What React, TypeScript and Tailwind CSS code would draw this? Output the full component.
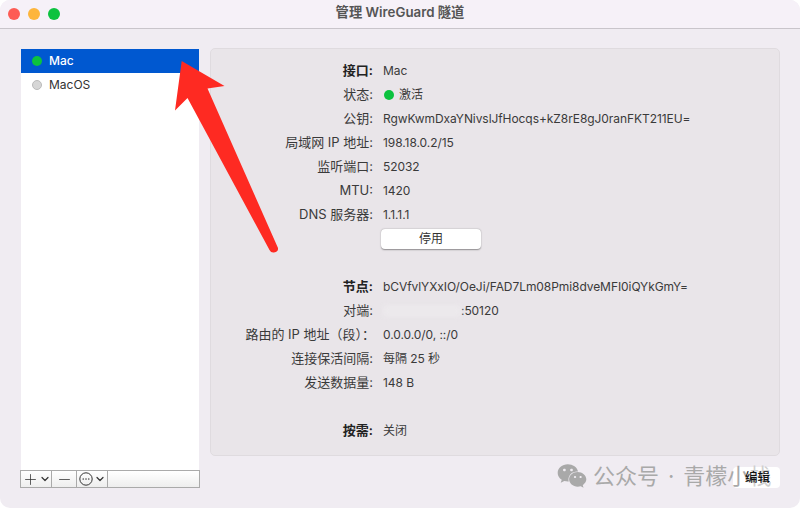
import { ChevronDown, Minus, Plus } from "lucide-react";
import { FaWeixin } from "react-icons/fa";

const font = { fontFamily: '"Inter", "Noto Sans CJK SC", sans-serif' };

function Row({
  label,
  bold,
  children,
}: {
  label: string;
  bold?: boolean;
  children?: React.ReactNode;
}) {
  return (
    <div className="flex h-6 items-center">
      <div
        className={`w-[164px] whitespace-pre text-right text-[13px] ${
          label.endsWith(":") ? "pr-[2px]" : ""
        } ${bold ? "font-semibold text-[#222]" : "text-[#3a3a3a]"}`}
      >
        {label}
      </div>
      <div className="ml-2 flex items-center whitespace-pre tracking-[-0.07px] text-[#3a3a3a]">
        {children}
      </div>
    </div>
  );
}

function MoreIcon() {
  return (
    <svg width={14} height={14} viewBox="0 0 14 14" fill="none" stroke="#333" strokeWidth={1}>
      <circle cx={7} cy={7} r={6.2} />
      <circle cx={4.2} cy={7} r={0.5} fill="#333" strokeWidth={0.4} />
      <circle cx={7} cy={7} r={0.5} fill="#333" strokeWidth={0.4} />
      <circle cx={9.8} cy={7} r={0.5} fill="#333" strokeWidth={0.4} />
    </svg>
  );
}

function Arrow() {
  return (
    <svg
      className="absolute left-0 top-0"
      width={800}
      height={508}
      viewBox="0 0 800 508"
    >
      <path
        d="M181.7 61 L224.5 86 L207.5 88.5 L278 248 Q278.5 252 274 252.5 Q271 253 269.5 250 L187.5 98 L175 110.5 Z"
        fill="#fe2a22"
      />
    </svg>
  );
}

export default function App() {
  return (
    <div className="relative h-[508px] w-[800px] overflow-hidden bg-white text-[12px]" style={font}>
      <div className="flex h-full flex-col overflow-hidden rounded-[10px] bg-[#f0ecf2]">
        {/* 标题栏 */}
        <div className="relative flex h-[29px] shrink-0 items-center justify-center border-b border-[#c9c5cb] bg-[#f6f1f8]">
          <div className="absolute left-[8px] flex gap-2">
            <div className="size-3 rounded-full bg-[#fd5c55]" />
            <div className="size-3 rounded-full bg-[#fdb53c]" />
            <div className="size-3 rounded-full bg-[#0cc23f]" />
          </div>
          <span className="mb-[2px] text-[13.3px] font-semibold text-[#555]">管理 WireGuard 隧道</span>
        </div>

        <div className="flex gap-[11px] pl-[21px] pr-5 pt-[19px]">
          {/* 左侧列表 */}
          <div className="mt-px flex h-[439px] w-[178px] shrink-0 flex-col bg-white">
            <div className="flex h-6 items-center bg-[#0058d0] pl-[11px] font-medium text-white">
              <div className="size-[10px] rounded-full bg-[#0cc23f]" />
              <span className="ml-[7px]">Mac</span>
            </div>
            <div className="flex h-6 items-center pl-[11px] text-[#333]">
              <div className="size-[10px] rounded-full border border-[#bbb] bg-[#d6d6d6]" />
              <span className="ml-[7px]">MacOS</span>
            </div>
            <div className="-mx-px mt-auto flex h-[18px] border border-[#aaa] bg-gradient-to-b from-white to-[#eeeeee] text-[#333]">
              <div className="flex w-[31px] items-center justify-center border-r border-[#aaa]">
                <Plus size={17} strokeWidth={1.1} />
                <ChevronDown size={12} strokeWidth={2.4} />
              </div>
              <div className="flex w-[25px] items-center justify-center border-r border-[#aaa]">
                <Minus size={17} strokeWidth={1.1} />
              </div>
              <div className="flex w-[31px] items-center justify-center gap-[1px] border-r border-[#aaa]">
                <MoreIcon />
                <ChevronDown size={12} strokeWidth={2.4} />
              </div>
            </div>
          </div>

          {/* 右侧详情 */}
          <div className="flex w-[570px] flex-col">
            <div className="h-[408px] rounded-[5px] border border-[#dfdbdf] bg-[#e9e5e9] pt-[10px]">
              <Row label="接口:" bold>Mac</Row>
              <Row label="状态:">
                <div className="ml-px size-[10px] rounded-full bg-[#0cc23f]" />
                <span className="ml-[5px]">激活</span>
              </Row>
              <Row label="公钥:">RgwKwmDxaYNivslJfHocqs+kZ8rE8gJ0ranFKT211EU=</Row>
              <Row label="局域网 IP 地址:">198.18.0.2/15</Row>
              <Row label="监听端口:">52032</Row>
              <Row label="MTU:">1420</Row>
              <Row label="DNS 服务器:">1.1.1.1</Row>
              <div className="ml-[170px] mt-[2px] flex h-5 w-[100px] items-center justify-center rounded-[4px] bg-white text-[#333] shadow-[0_0.5px_1.5px_rgba(0,0,0,0.4)]">
                停用
              </div>
              <div className="h-[26px]" />
              <Row label="节点:" bold>bCVfvlYXxIO/OeJi/FAD7Lm08Pmi8dveMFI0iQYkGmY=</Row>
              <Row label="对端:">
                <div className="h-3 w-[78px] rounded-[3px] bg-[#ece9ec] blur-[2px]" />
                :50120
              </Row>
              <Row label="路由的 IP 地址（段）：">0.0.0.0/0, ::/0</Row>
              <Row label="连接保活间隔:">每隔 25 秒</Row>
              <Row label="发送数据量:">148 B</Row>
              <div className="h-6" />
              <Row label="按需:" bold>关闭</Row>
            </div>
            <div className="mt-[11px] flex justify-end">
              <div className="flex h-[21px] w-[47px] items-center justify-center rounded-[4px] bg-white" />
            </div>
          </div>
        </div>
      </div>

      <Arrow />

      {/* 水印 */}
      <div className="absolute left-[557px] top-[461px] flex items-center text-[#a9a9a9]">
        <FaWeixin size={30} />
        <span className="ml-[6px] whitespace-pre text-[22px] leading-7">
          公众号<span className="mx-[9px]">·</span>青檬小<span className="text-[#cfcfcf]">栈</span>
        </span>
      </div>
      <div className="absolute left-[745px] top-[468px] flex h-5 items-center text-[12.5px] font-medium text-[#111]">
        编辑
      </div>
    </div>
  );
}
